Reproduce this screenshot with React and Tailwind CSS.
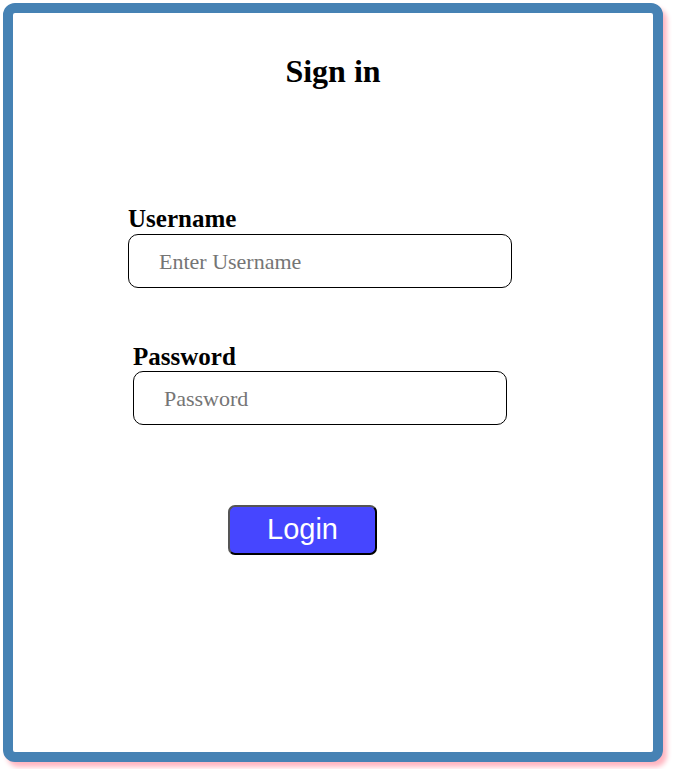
export default function App() {
  return (
    <div className="w-[673px] h-[769px] bg-white pt-[3px] pl-[3px]">
      <div className="w-[660px] h-[759px] border-[10px] border-[#4682b4] rounded-[12px] shadow-[4px_5px_5px_#ffb6c1] bg-white font-['Liberation_Serif',serif] text-black">
        <h1 className="text-[32px] font-bold text-center leading-[36px] pt-[40px]">Sign in</h1>
        <div className="pt-[115px] pl-[115px]">
          <div className="text-[25px] font-bold leading-[28px] pt-[1px]">Username</div>
          <div className="mt-[1px] w-[384px] h-[54px] border border-black rounded-[10px] flex items-center pl-[30px] text-[22px] text-[#757575]">
            Enter Username
          </div>
        </div>
        <div className="pt-[54px] pl-[120px]">
          <div className="text-[25px] font-bold leading-[28px] pt-[1px]">Password</div>
          <div className="w-[374px] h-[54px] border border-black rounded-[10px] flex items-center pl-[30px] text-[22px] text-[#757575]">
            Password
          </div>
        </div>
        <div className="pt-[80px] pl-[215px]">
          <button className="w-[149px] h-[50px] bg-[#4646ff] text-white font-['Liberation_Sans',sans-serif] text-[29px] rounded-[7px] border-2 border-t-[#555] border-l-[#555] border-b-black border-r-black flex items-center justify-center">
            Login
          </button>
        </div>
      </div>
    </div>
  );
}
